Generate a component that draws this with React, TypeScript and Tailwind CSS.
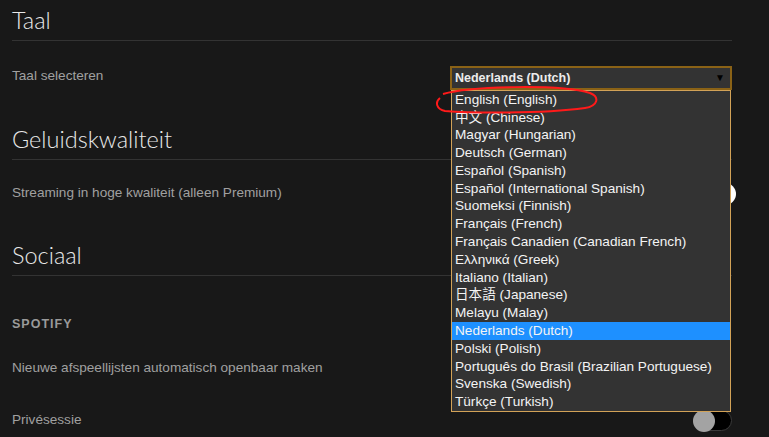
import { ReactNode } from 'react'

const languages = [
  'English (English)',
  '中文 (Chinese)',
  'Magyar (Hungarian)',
  'Deutsch (German)',
  'Español (Spanish)',
  'Español (International Spanish)',
  'Suomeksi (Finnish)',
  'Français (French)',
  'Français Canadien (Canadian French)',
  'Ελληνικά (Greek)',
  'Italiano (Italian)',
  '日本語 (Japanese)',
  'Melayu (Malay)',
  'Nederlands (Dutch)',
  'Polski (Polish)',
  'Português do Brasil (Brazilian Portuguese)',
  'Svenska (Swedish)',
  'Türkçe (Turkish)',
]

const selected = 'Nederlands (Dutch)'

function SectionTitle({ children, className }: { children: ReactNode; className: string }) {
  return (
    <h2
      className={`flex items-end border-b border-[#333333] font-['Lato',sans-serif] text-[23.5px] font-light leading-[40px] text-[#e8e8e8] ${className}`}
    >
      {children}
    </h2>
  )
}

function Toggle({ on }: { on?: boolean }) {
  return (
    <div className="relative h-[21px] w-[39px] rounded-full border border-[#3a3a3a] bg-black">
      {on ? (
        <div className="absolute -right-[5px] -top-[1px] h-[22px] w-[22px] rounded-full bg-white" />
      ) : (
        <div className="absolute -left-[1px] -top-[1px] h-[22px] w-[22px] rounded-full bg-[#a3a3a3]" />
      )}
    </div>
  )
}

function LanguageSelect() {
  return (
    <div className="relative mt-[4px] w-[282px]">
      <div className="flex h-[24px] items-center justify-between border-2 border-[#8a6216] bg-[#333333] pl-[3px] pr-[5px]">
        <span className="text-[12.5px] font-bold text-[#ececec]">{selected}</span>
        <span className="text-[10px] leading-none text-black">▼</span>
      </div>

      {/* open dropdown list */}
      <ul className="absolute left-[1px] right-[1px] top-[24px] z-10 border border-[#d2a257] bg-[#333333]">
        {languages.map((lang) => (
          <li
            key={lang}
            className={`flex h-[17.8px] items-center pl-[3px] text-[13.6px] text-[#f4f4f4] ${
              lang === selected ? 'bg-[#1e90ff]' : ''
            } font-['Liberation_Sans','Noto_Sans_CJK_SC',sans-serif]`}
          >
            {lang}
          </li>
        ))}
      </ul>
    </div>
  )
}

export default function App() {
  return (
    <div className="relative h-[437px] w-[769px] overflow-hidden bg-[#181818] font-['Liberation_Sans',sans-serif]">
      <div className="w-[732px] pl-[12px]">
        <SectionTitle className="h-[41px]">Taal</SectionTitle>
        <div className="flex h-[70px] items-center justify-between">
          <span className="text-[13.6px] text-[#a0a0a0]">Taal selecteren</span>
          <LanguageSelect />
        </div>

        <SectionTitle className="h-[49px]">Geluidskwaliteit</SectionTitle>
        <div className="flex h-[66px] items-center justify-between">
          <span className="text-[13.6px] text-[#a0a0a0]">Streaming in hoge kwaliteit (alleen Premium)</span>
          <Toggle on />
        </div>

        <SectionTitle className="h-[50px]">Sociaal</SectionTitle>
        <div className="mt-[24px] flex h-[48px] items-center">
          <span className="text-[12.5px] font-bold tracking-[1px] text-[#9a9a9a]">SPOTIFY</span>
        </div>
        <div className="flex h-[40px] items-center">
          <span className="text-[13.6px] text-[#a0a0a0]">Nieuwe afspeellijsten automatisch openbaar maken</span>
        </div>
        <div className="mt-[8px] flex h-[48px] items-center justify-between">
          <span className="text-[13.6px] text-[#a0a0a0]">Privésessie</span>
          <Toggle />
        </div>
      </div>

      {/* red annotation circle */}
      <svg className="pointer-events-none absolute inset-0 z-20" width="769" height="437" viewBox="0 0 769 437">
        <path
          d="M 443 94 C 470 86, 560 84, 590 93 C 600 97, 598 106, 585 108 C 540 114, 470 113, 445 111 C 436 109, 435 102, 440 98"
          fill="none"
          stroke="#ff1a1a"
          strokeWidth="2"
        />
      </svg>
    </div>
  )
}
